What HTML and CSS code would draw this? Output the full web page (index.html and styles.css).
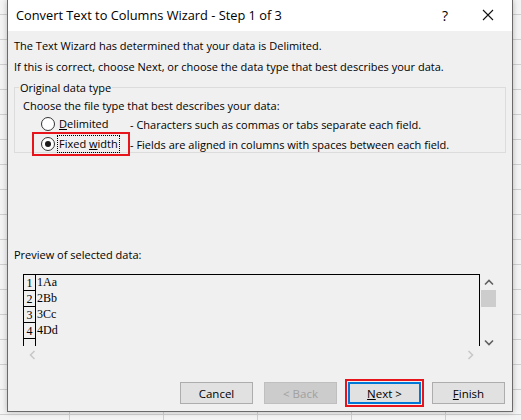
FILE: index.html
```html
<!DOCTYPE html>
<html lang="en">
<head>
    <meta charset="UTF-8">
    <title>Convert Text to Columns Wizard - Step 1 of 3</title>
    <link rel="stylesheet" href="styles.css">
</head>
<body>
    <div class="dialog">
        <div class="titlebar">
            <span class="title">Convert Text to Columns Wizard - Step 1 of 3</span>
            <span class="help">?</span>
            <svg class="close" width="12" height="12" viewBox="0 0 12 12">
                <path d="M1 1 L11 11 M11 1 L1 11" stroke="#111" stroke-width="1.1" fill="none"/>
            </svg>
        </div>
        <div class="content">
            <p class="line">The Text Wizard has determined that your data is Delimited.</p>
            <p class="line">If this is correct, choose Next, or choose the data type that best describes your data.</p>

            <fieldset class="group">
                <legend>Original data type</legend>
                <p class="choose">Choose the file type that best describes your data:</p>
                <div class="radio-row">
                    <span class="radio-wrap">
                        <span class="radio"></span>
                        <span class="radio-label"><u>D</u>elimited</span>
                    </span>
                    <span class="desc">- Characters such as commas or tabs separate each field.</span>
                </div>
                <div class="radio-row">
                    <span class="radio-wrap marked">
                        <span class="radio checked"></span>
                        <span class="radio-label focused">Fixed <u>w</u>idth</span>
                    </span>
                    <span class="desc">- Fields are aligned in columns with spaces between each field.</span>
                </div>
            </fieldset>

            <p class="line preview-label">Preview of selected data:</p>
            <div class="preview">
                <div class="preview-top">
                    <div class="grid">
                        <div class="row"><span class="num">1</span><span class="data">1Aa</span></div>
                        <div class="row"><span class="num">2</span><span class="data">2Bb</span></div>
                        <div class="row"><span class="num">3</span><span class="data">3Cc</span></div>
                        <div class="row"><span class="num">4</span><span class="data">4Dd</span></div>
                        <div class="row"><span class="num"></span><span class="data"></span></div>
                    </div>
                    <div class="vscroll">
                        <svg width="10" height="7" viewBox="0 0 10 7"><path d="M1 5.5 L5 1.5 L9 5.5" stroke="#606060" stroke-width="1.6" fill="none"/></svg>
                        <div class="thumb"></div>
                        <div class="vspace"></div>
                        <svg width="10" height="7" viewBox="0 0 10 7"><path d="M1 1.5 L5 5.5 L9 1.5" stroke="#606060" stroke-width="1.6" fill="none"/></svg>
                    </div>
                </div>
                <div class="hscroll">
                    <svg width="7" height="10" viewBox="0 0 7 10"><path d="M5.5 1 L1.5 5 L5.5 9" stroke="#c8c8c8" stroke-width="1.6" fill="none"/></svg>
                    <svg width="7" height="10" viewBox="0 0 7 10"><path d="M1.5 1 L5.5 5 L1.5 9" stroke="#c8c8c8" stroke-width="1.6" fill="none"/></svg>
                </div>
            </div>

            <div class="buttons">
                <button class="btn">Cancel</button>
                <button class="btn" disabled>&lt; Back</button>
                <button class="btn default marked"><u>N</u>ext &gt;</button>
                <button class="btn"><u>F</u>inish</button>
            </div>
        </div>
    </div>
</body>
</html>
```

FILE: styles.css
```css
html, body {
    margin: 0;
    height: 100%;
}
body {
    width: 521px;
    height: 420px;
    overflow: hidden;
    font-family: "Open Sans", "Noto Sans", Arial, sans-serif;
    font-size: 11px;
    color: #000;
    background-color: #f4f4f4;
    background-image:
        linear-gradient(to bottom, transparent 24px, #d0d0d0 24px, #d0d0d0 25px, transparent 25px),
        linear-gradient(to right, transparent 69px, #d0d0d0 69px, #d0d0d0 70px, transparent 70px);
    background-size: 100% 25px, 94px 100%;
    background-position: 0 -10px, 0 0;
}
.dialog {
    margin-left: 7px;
    width: 504px;
    height: 411px;
    background: #f0f0f0;
    border: 1px solid #6a6a6a;
    border-top: none;
    box-shadow: 0 0 6px rgba(0, 0, 0, 0.25);
    display: flex;
    flex-direction: column;
}
.titlebar {
    height: 30px;
    background: #fff;
    display: flex;
    align-items: center;
    padding-left: 8px;
    padding-bottom: 1px;
    flex-shrink: 0;
}
.title {
    font-size: 12.8px;
    flex: 1;
}
.help {
    font-size: 14px;
    margin-right: 34px;
}
.close {
    margin-right: 18px;
}
.content {
    padding: 4px 6px 0 6px;
    flex: 1;
    display: flex;
    flex-direction: column;
}
p {
    margin: 0;
}
.line {
    line-height: 21px;
}
.group {
    margin: 0;
    padding: 0 0 0 8px;
    border: 1px solid #dcdcdc;
}
.group legend {
    line-height: 21px;
    padding: 0 1px;
    margin-left: -4px;
}
.choose {
    line-height: 16px;
}
.radio-row {
    display: flex;
    align-items: center;
    height: 20px;
}
.radio-row:last-child {
    margin-bottom: -2px;
}
.radio-wrap {
    display: flex;
    align-items: center;
    flex-shrink: 0;
    width: 89px;
    margin-left: 9px;
    padding-left: 9px;
}
.radio-wrap.marked {
    outline: 2px solid #e8141b;
    outline-offset: -2px;
    height: 24px;
}
.radio {
    width: 12px;
    height: 12px;
    border: 1px solid #333;
    border-radius: 50%;
    background: #fff;
    position: relative;
    margin-right: 2px;
}
.radio.checked::after {
    content: "";
    position: absolute;
    left: 3px;
    top: 3px;
    width: 6px;
    height: 6px;
    border-radius: 50%;
    background: #1a1a1a;
}
.radio-label {
    padding: 0 1px;
    border: 1px dotted transparent;
    line-height: 16px;
}
.radio-label.focused {
    border-color: #000;
}
.preview-label {
    margin-top: 91px;
}
.preview {
    margin: 9px 0 0 9px;
    width: 474px;
}
.preview-top {
    display: flex;
}
.grid {
    width: 456px;
    height: 71px;
    border: 1px solid #000;
    border-bottom: none;
    overflow: hidden;
    font-family: "Liberation Serif", "DejaVu Serif", serif;
    font-size: 12px;
}
.row {
    display: flex;
    height: 16px;
}
.num {
    width: 11px;
    border-right: 1px solid #000;
    border-bottom: 1px solid #000;
    display: flex;
    align-items: flex-end;
    justify-content: center;
    line-height: 13px;
}
.data {
    padding-left: 1px;
    line-height: 15px;
}
.vscroll {
    width: 17px;
    display: flex;
    flex-direction: column;
    align-items: center;
    padding-top: 5px;
}
.thumb {
    width: 15px;
    height: 17px;
    background: #cdcdcd;
    margin-top: 4px;
}
.vspace {
    flex: 1;
}
.hscroll {
    height: 18px;
    display: flex;
    justify-content: space-between;
    align-items: center;
    padding: 0 6px;
    width: 445px;
}
.buttons {
    margin-top: auto;
    margin-bottom: 7px;
    display: flex;
    justify-content: flex-end;
    gap: 11px;
    padding-right: 1px;
}
.btn {
    width: 73px;
    height: 22px;
    background: #e1e1e1;
    border: 1px solid #adadad;
    font-family: inherit;
    font-size: 11.5px;
    color: #000;
    padding: 0;
}
.btn:disabled {
    background: #cccccc;
    border-color: #bfbfbf;
    color: #a0a0a0;
}
.btn.default {
    border: 2px solid #0078d7;
}
.btn.marked {
    outline: 2px solid #e8141b;
    outline-offset: 1px;
}
```
